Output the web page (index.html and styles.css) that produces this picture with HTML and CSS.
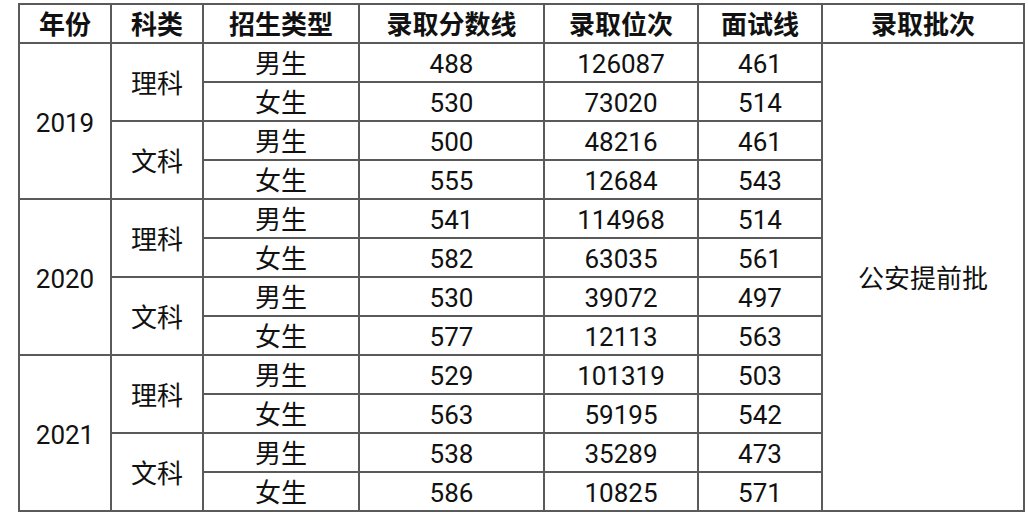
FILE: index.html
```html
<!DOCTYPE html>
<html lang="zh">
<head>
<meta charset="utf-8">
<link rel="stylesheet" href="styles.css">
</head>
<body>
<table class="grid">
<colgroup>
<col class="c1"><col class="c2"><col class="c3"><col class="c4"><col class="c5"><col class="c6"><col class="c7">
</colgroup>
<thead>
<tr><th>年份</th><th>科类</th><th>招生类型</th><th>录取分数线</th><th>录取位次</th><th>面试线</th><th>录取批次</th></tr>
</thead>
<tbody>
<tr><td rowspan="4">2019</td><td rowspan="2">理科</td><td>男生</td><td>488</td><td>126087</td><td>461</td><td rowspan="12" class="batch">公安提前批</td></tr>
<tr><td>女生</td><td>530</td><td>73020</td><td>514</td></tr>
<tr><td rowspan="2">文科</td><td>男生</td><td>500</td><td>48216</td><td>461</td></tr>
<tr><td>女生</td><td>555</td><td>12684</td><td>543</td></tr>
<tr><td rowspan="4">2020</td><td rowspan="2">理科</td><td>男生</td><td>541</td><td>114968</td><td>514</td></tr>
<tr><td>女生</td><td>582</td><td>63035</td><td>561</td></tr>
<tr><td rowspan="2">文科</td><td>男生</td><td>530</td><td>39072</td><td>497</td></tr>
<tr><td>女生</td><td>577</td><td>12113</td><td>563</td></tr>
<tr><td rowspan="4">2021</td><td rowspan="2">理科</td><td>男生</td><td>529</td><td>101319</td><td>503</td></tr>
<tr><td>女生</td><td>563</td><td>59195</td><td>542</td></tr>
<tr><td rowspan="2">文科</td><td>男生</td><td>538</td><td>35289</td><td>473</td></tr>
<tr><td>女生</td><td>586</td><td>10825</td><td>571</td></tr>
</tbody>
</table>
</body>
</html>
```
FILE: styles.css
```css
html, body {
  margin: 0;
  background: #ffffff;
}
body {
  padding: 3px 0 0 18px;
  font-family: Roboto, "Noto Sans CJK SC", sans-serif;
  color: #111;
}
.grid {
  border-collapse: collapse;
  table-layout: fixed;
  width: 1005px;
}
.c1 { width: 92px; }
.c2 { width: 92px; }
.c3 { width: 156px; }
.c4 { width: 185px; }
.c5 { width: 154px; }
.c6 { width: 124px; }
.c7 { width: 202px; }
.grid th, .grid td {
  border: 2px solid #5a5a5a;
  text-align: center;
  vertical-align: middle;
  padding: 3px 0 0;
  height: 34px;
  font-size: 26px;
  line-height: 34px;
}
.grid th {
  font-weight: 700;
}
.grid td {
  font-weight: 400;
}
```
